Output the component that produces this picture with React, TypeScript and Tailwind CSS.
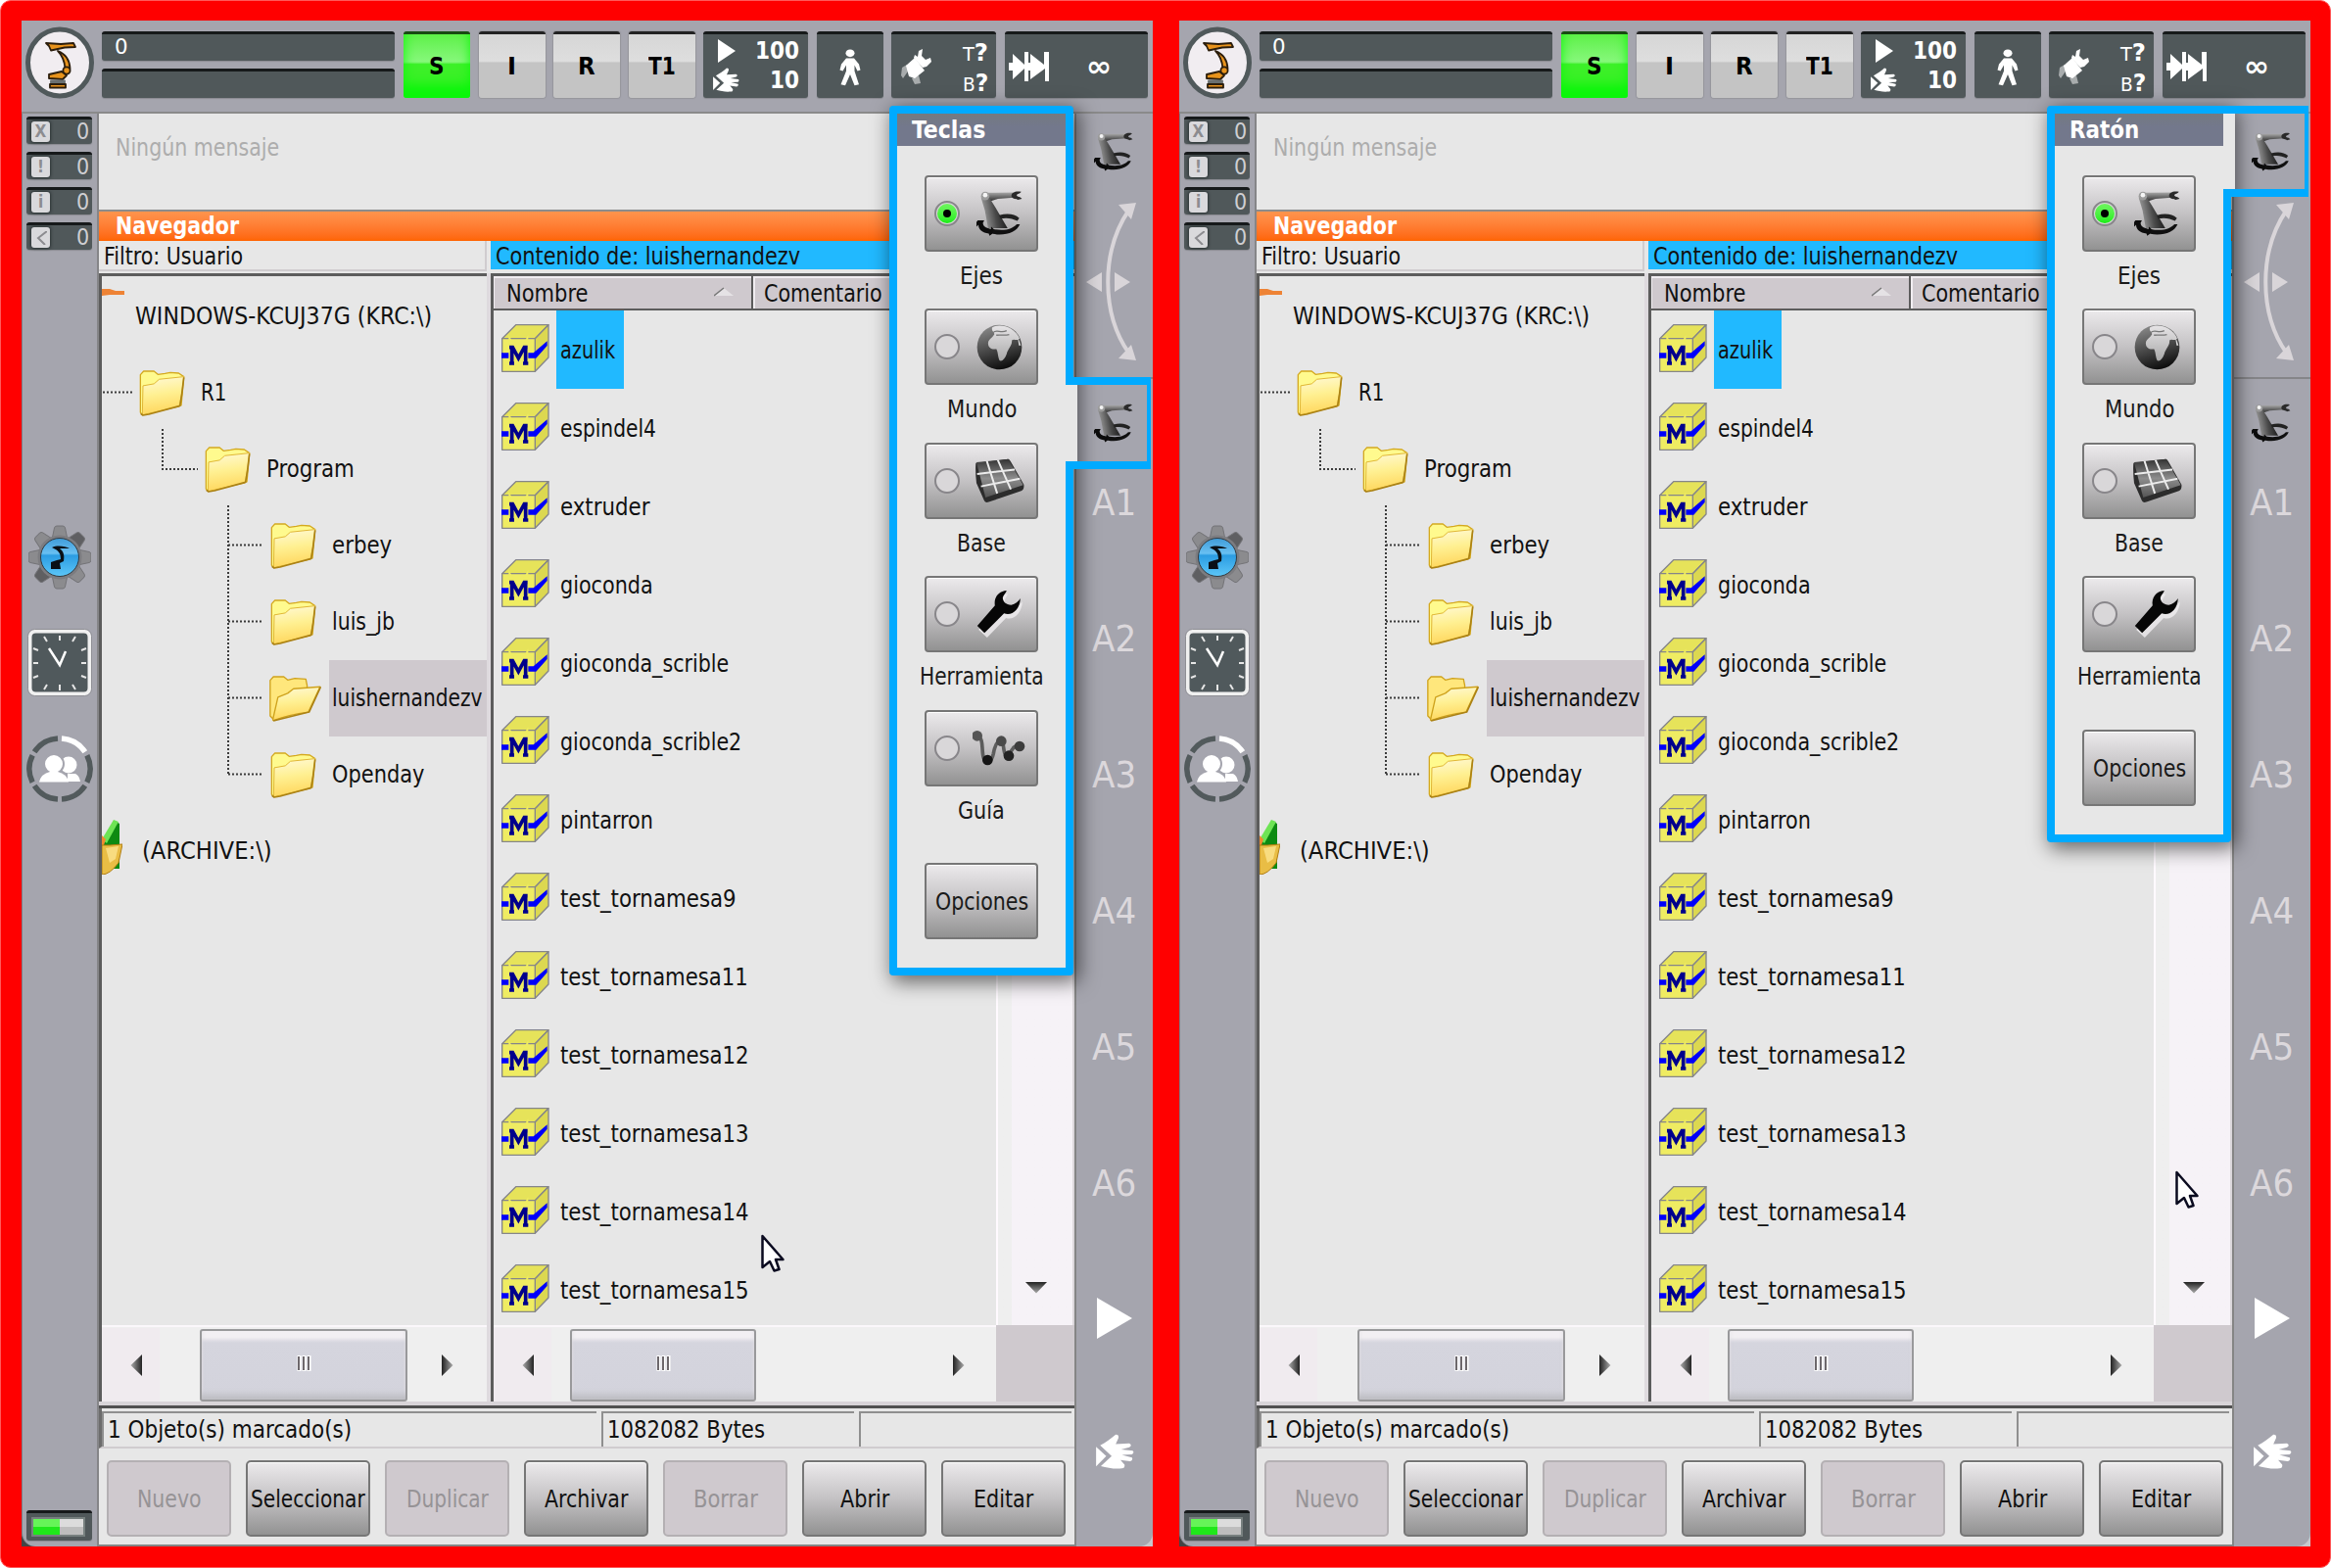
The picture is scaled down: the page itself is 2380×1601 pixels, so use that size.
import { useLayoutEffect, useRef, useState } from "react";
import type { ReactNode } from "react";

/* Text stretched horizontally so that it takes exactly `w` pixels. */
function Fit({ w, children, className = "" }: { w: number; children: ReactNode; className?: string }) {
  const ref = useRef<HTMLSpanElement>(null);
  const [k, setK] = useState(1);
  useLayoutEffect(() => {
    if (ref.current) setK(w / ref.current.offsetWidth);
  }, [w]);
  return (
    <span className={`inline-block shrink-0 whitespace-nowrap ${className}`} style={{ width: w }}>
      <span ref={ref} className="inline-block origin-left" style={{ transform: `scaleX(${k})` }}>
        {children}
      </span>
    </span>
  );
}

function KukaIcon() {
  return (
    <svg viewBox="0 0 70 74" className="h-[74px] w-[70px] shrink-0">
      <ellipse cx="35" cy="37" rx="32.5" ry="34" fill="#f1edf1" stroke="#50595b" strokeWidth="5" />
      <g fill="#e8931c" stroke="#2b1d0c" strokeWidth="1.800" strokeLinejoin="round">
        <path d="M21 17 L36 18 L49 17 L51 21 L40 21.500 L26 24.500 L24 20Z" />
        <path d="M33 25 C41 28 45 33 45.500 43 L40.500 43 C40 36 38 30 33 25Z" />
        <circle cx="42" cy="45" r="3.600" />
        <path d="M24 49 L37 46 L42 50 L38 54 L24 53Z" />
        <path d="M26 55.500 H40 V57.500 H26Z" fill="#9a9a9a" stroke="#6a6f70" />
        <path d="M25 59 H41 V62.500 H25Z" />
      </g>
    </svg>
  );
}

function RobotIcon({ className }: { className: string }) {
  return (
    <svg viewBox="0 0 142 138" className={className}>
      <defs>
        <linearGradient id="arm" x1="0" y1="0.200" x2="1" y2="0">
          <stop offset="0" stopColor="#9a9a9a" />
          <stop offset="0.450" stopColor="#4a4a4a" />
          <stop offset="1" stopColor="#080808" />
        </linearGradient>
        <linearGradient id="boom" x1="0" y1="0" x2="0" y2="1">
          <stop offset="0" stopColor="#a8a8a8" />
          <stop offset="1" stopColor="#2a2a2a" />
        </linearGradient>
      </defs>
      <path d="M28 5 L114 4 L116 20 L66 24 L40 32Z" fill="url(#boom)" />
      <path d="M138 2 C120 -2 106 5 108 16 C112 26 124 22 128 27 L140 24 C136 16 126 19 124 13 C126 7 134 9 138 2Z" fill="#2a2a2a" />
      <path d="M14 20 L42 24 L56 46 L96 114 L36 114 L26 60Z" fill="url(#arm)" />
      <circle cx="27" cy="15" r="13" fill="#9c9c9c" />
      <circle cx="27" cy="12" r="7" fill="#f5f5f5" />
      <path d="M70 74 C98 67 118 71 132 83 L126 92 C110 84 94 81 74 85Z" fill="#222" />
      <path d="M4 90 L24 90 L20 98 C20 108 28 114 44 117 L46 110 L60 124 L40 138 L38 131 C18 129 6 118 6 104 L-2 112 L-2 98Z" fill="#0c0c0c" />
      <path d="M50 117 C88 124 112 116 124 102 L134 102 C124 126 90 139 50 132Z" fill="#101010" />
    </svg>
  );
}

function GlobeIcon() {
  return (
    <svg viewBox="0 0 140 142" className="h-[47px] w-[47px]">
      <defs>
        <linearGradient id="sea" x1="0.300" y1="0" x2="0.600" y2="1">
          <stop offset="0" stopColor="#8a8a8a" />
          <stop offset="0.500" stopColor="#4a4a4a" />
          <stop offset="1" stopColor="#0a0a0a" />
        </linearGradient>
        <linearGradient id="land" x1="0" y1="0" x2="0" y2="1">
          <stop offset="0" stopColor="#e6e4e6" />
          <stop offset="1" stopColor="#a9a9a9" />
        </linearGradient>
      </defs>
      <circle cx="70" cy="71" r="69" fill="url(#sea)" />
      <path d="M48 10 C70 -4 118 8 132 44 C124 54 116 44 108 50 C110 66 96 76 92 92 C86 108 78 116 70 112 C64 96 66 86 60 76 C48 80 34 72 35 58 C36 46 48 42 52 34 C60 26 42 22 48 10Z" fill="url(#land)" />
      <path d="M50 26 C62 14 74 30 92 20 M60 34 C76 32 84 36 100 32" stroke="#777" strokeWidth="4" fill="none" />
      <path d="M126 40 C132 52 134 60 136 66 L130 66Z" fill="#ddd" />
    </svg>
  );
}

function GridIcon() {
  return (
    <svg viewBox="0 0 154 138" className="h-[46px] w-[51px]">
      <defs>
        <linearGradient id="tile" x1="0" y1="0" x2="0" y2="1">
          <stop offset="0" stopColor="#333" />
          <stop offset="0.500" stopColor="#8d8d8d" />
          <stop offset="1" stopColor="#555" />
        </linearGradient>
      </defs>
      <path d="M4 14 L104 2 Q108 2 112 10 L152 80 Q154 96 144 100 L44 134 Q34 138 30 130 L6 76 Q2 40 4 14Z" fill="#2c2c2c" />
      <path d="M6 12 L104 2 L150 82 L34 120 Z" fill="url(#tile)" />
      <path d="M38 8 L70 108 M72 5 L112 95 M8 48 L124 34 M20 86 L140 62" stroke="#ececec" strokeWidth="6" fill="none" />
    </svg>
  );
}

function WrenchIcon() {
  return (
    <svg viewBox="0 0 140 144" className="h-[48px] w-[47px]">
      <path
        d="M92 2 C66 4 52 24 58 50 L2 112 L28 136 L86 76 C110 84 134 62 136 26 C130 34 120 44 108 46 C92 46 82 36 82 22 C84 14 90 8 92 2Z"
        fill="#f1eff1"
        transform="translate(4 8)"
        opacity="0.800"
      />
      <path d="M92 0 C66 2 52 22 56 46 L2 108 L24 130 L84 70 C108 78 132 60 134 24 C128 34 118 42 106 44 C90 44 80 34 80 22 C82 12 90 8 92 0Z" fill="#060606" />
    </svg>
  );
}

function PathIcon() {
  return (
    <svg viewBox="0 0 162 108" className="h-[36px] w-[54px]">
      <path d="M14 16 C36 22 26 60 34 84 C40 106 58 98 64 70 C70 36 86 16 94 44 C98 80 106 92 114 72 C122 52 132 44 144 48" stroke="#5c5c5c" strokeWidth="11" fill="none" />
      <circle cx="14" cy="16" r="16" fill="#555" />
      <circle cx="88" cy="32" r="16" fill="#4a4a4a" />
      <circle cx="144" cy="48" r="16" fill="#3c3c3c" />
      <circle cx="46" cy="90" r="16" fill="#151515" />
      <circle cx="111" cy="77" r="16" fill="#222" />
    </svg>
  );
}

function HandIcon({ className }: { className: string }) {
  return (
    <svg viewBox="0 0 112 104" className={className} fill="#fff">
      <path d="M0 38 L30 66 L0 96Z" />
      <path d="M12 34 C28 26 44 14 58 2 Q68 2 66 12 L58 30 L98 28 Q108 33 98 40 L74 46 L108 50 Q114 55 106 61 L76 62 L106 70 Q110 78 100 81 L72 77 L84 91 Q86 101 76 102 C52 104 34 100 14 95 L46 66Z" />
    </svg>
  );
}

function Folder({ open = false }: { open?: boolean }) {
  return (
    <svg viewBox="0 0 160 142" className={open ? "-ml-[2px] h-[47px] w-[54px] shrink-0" : "h-[47px] w-[53px] shrink-0"}>
      <defs>
        <linearGradient id="fold" x1="0" y1="0" x2="0.150" y2="1">
          <stop offset="0" stopColor="#fff9d8" />
          <stop offset="0.500" stopColor="#fff092" />
          <stop offset="1" stopColor="#ffd75e" />
        </linearGradient>
      </defs>
      {open ? (
        <g stroke="#cfa21c" strokeWidth="4" strokeLinejoin="round">
          <path d="M4 14 L14 3 H46 L58 13 L80 8 L114 10 L118 30 L118 100 L16 136 L4 124Z" fill="#ffe77c" />
          <path d="M12 136 L28 66 L58 54 L76 40 L158 34 L122 112 Q60 120 14 138Z" fill="url(#fold)" />
          <path d="M14 139 L124 112 L160 34" fill="none" stroke="#ab8215" strokeWidth="5" />
        </g>
      ) : (
        <g stroke="#d4a91f" strokeWidth="4" strokeLinejoin="round">
          <path d="M4 14 L14 3 H46 L58 13 L80 10 L96 7 L122 9 L138 20 L130 108 L10 138 L4 130Z" fill="#fffa8e" />
          <path d="M10 138 L12 48 L46 42 L62 28 L138 20 L132 70 L124 112Z" fill="url(#fold)" stroke="#e0b634" strokeWidth="3" />
          <path d="M5 134 L12 139 L30 136 L126 110 L132 72 L138 22" fill="none" stroke="#ab8215" strokeWidth="5" />
        </g>
      )}
    </svg>
  );
}

function ModuleIcon() {
  return (
    <svg viewBox="0 0 147 147" className="h-[49px] w-[49px] shrink-0">
      <g stroke="#85858a" strokeWidth="4" strokeLinejoin="round">
        <path d="M2 44 L44 2 H144 L103 44Z" fill="#e6e35a" />
        <path d="M103 44 L144 2 V102 L103 145Z" fill="#dcd850" />
        <path d="M2 44 H103 V145 H2Z" fill="#efec62" />
      </g>
      <path d="M0 88 H98 L140 52 V66 L106 104 H0Z" fill="#0000fa" />
      <path d="M32 122 V70 L52 104 L72 70 V122" stroke="#efec62" strokeWidth="20" fill="none" />
      <path d="M24 71 H34 L52 104 L70 71 H80 M32 72 V120 M74 72 V120 M24 120 H39 M66 120 H82" stroke="#00008c" strokeWidth="11" fill="none" />
    </svg>
  );
}

function GearIcon() {
  return (
    <svg viewBox="-32 -33 64 66" className="mx-auto mt-[281px] h-[66px] w-[64px] shrink-0">
      <defs>
        <linearGradient id="disc" x1="0" y1="0" x2="0" y2="1">
          <stop offset="0" stopColor="#3f9bd8" />
          <stop offset="0.400" stopColor="#69c0f2" />
          <stop offset="0.450" stopColor="#2b9ce2" />
          <stop offset="1" stopColor="#5cc6f8" />
        </linearGradient>
      </defs>
      {[0, 45, 90, 135, 180, 225, 270, 315].map((a) => (
        <path
          key={a}
          d="M-8 -18 L-5.500 -30 Q-5 -32 -3 -32 H3 Q5 -32 5.500 -30 L8 -18Z"
          transform={`rotate(${a})`}
          fill={a === 45 || a === 225 ? "#5f5f62" : "#8b8b8e"}
          stroke="#737377"
          strokeWidth="1"
        />
      ))}
      <circle r="22.500" fill="#7c7c80" />
      <circle r="19.500" fill="url(#disc)" stroke="#333a40" strokeWidth="1" />
      <path d="M-8 -10 C-2 -13 6 -11 10 -9 L0 -9 C4 -6 5 -2 4 4 L0 6 L1 12 H-9 L-9 5 L-3 3 L1 2 C1 -4 -1 -7 -8 -10Z" fill="#0a1016" />
    </svg>
  );
}

function ClockIcon() {
  return (
    <svg viewBox="0 0 66 70" className="mx-auto mt-[40px] h-[70px] w-[66px] shrink-0">
      <rect x="2.500" y="2.500" width="61" height="64" rx="6" fill="#50595c" stroke="#f0f0f0" strokeWidth="4" />
      <rect x="0.500" y="0.500" width="65" height="68" rx="7" fill="none" stroke="#8f8f95" strokeWidth="1" />
      <path
        d="M33 7 V12 M33 57 V63 M6 35 H11 M55 35 H60 M17 8 L20 13 M49 8 L46 13 M17 62 L20 57 M49 62 L46 57 M6 20 L11 22 M60 20 L55 22 M6 50 L11 48 M60 50 L55 48"
        stroke="#e6e6e6"
        strokeWidth="2"
      />
      <path d="M22 20 L33 37 L39 23" stroke="#fff" strokeWidth="2.500" fill="none" />
    </svg>
  );
}

function UsersIcon() {
  return (
    <svg viewBox="-34 -34 68 70" className="mx-auto mt-[39px] h-[70px] w-[68px] shrink-0">
      {[0, 60, 120, 180, 240, 300].map((a) => (
        <path
          key={a}
          d="M2 -31 A31 31 0 0 1 25.800 -17.200"
          transform={`rotate(${a})`}
          fill="none"
          stroke={a === 0 ? "#fff" : "#525a5c"}
          strokeWidth="5.500"
        />
      ))}
      <g fill="#fff">
        <circle cx="9" cy="-4" r="8.500" />
        <path d="M8 5 L16 5 Q20 7 21 13 H8Z" />
        <circle cx="-6" cy="-5" r="10" fill="#fff" stroke="#a5a5ae" strokeWidth="2" />
        <path d="M-21 13.500 Q-19 5 -10 3 H-2 Q7 5 9 13.500Z" />
      </g>
    </svg>
  );
}

function Cursor({ className }: { className: string }) {
  return (
    <svg viewBox="0 0 24 40" className={`absolute h-[40px] w-[24px] ${className}`}>
      <path d="M1.500 2 V34 L9 28 L13.500 37.500 L18.500 36 L15 26 H22.500Z" fill="#fff" stroke="#0b0b20" strokeWidth="2.500" strokeLinejoin="round" />
    </svg>
  );
}

const darkBox = "rounded-[3px] border-t-[3px] border-[#16191a] bg-[#50585a] shadow-[0_1px_1px_#8b8b92]";
const pill = "flex w-[68px] items-center justify-center rounded-[3px] border-t-[3px] pt-px text-[24px] font-bold text-black";
const greyPill = `${pill} border-[#222] bg-linear-to-b from-[#d6d6d6] from-0% via-[#dedede] via-42% to-[#c4c4c4] to-45% shadow-[0_0_1px_1px_#96969c]`;

function TopBar() {
  return (
    <header className="flex h-[95px] shrink-0 items-start border-b-2 border-[#8a8a8a] bg-[#a5a5ae] pl-[4px]">
      <div className="mt-[6px]">
        <KukaIcon />
      </div>
      <div className="mt-[11px] ml-[8px] flex w-[299px] flex-col gap-[8px]">
        <div className={`flex h-[30px] items-center pb-px pl-[13px] text-[22px] leading-none text-white ${darkBox}`}>
          <Fit w={14}>0</Fit>
        </div>
        <div className={`h-[30px] ${darkBox}`} />
      </div>
      <div className="mt-[11px] ml-[9px] flex h-[68px] gap-[8.5px]">
        <div className={`${pill} border-[#184b12] bg-linear-to-b from-[#5cf046] from-0% via-[#86f87a] via-43% to-[#3cf028] to-47% shadow-[inset_0_-14px_12px_#0af60a]`}>
          <Fit w={16}>S</Fit>
        </div>
        <div className={greyPill}><Fit w={9}>I</Fit></div>
        <div className={greyPill}><Fit w={18}>R</Fit></div>
        <div className={greyPill}><Fit w={28}>T1</Fit></div>
        <div className={`flex w-[107px] justify-between pr-[9px] pl-[9px] text-[24px] leading-[30px] font-bold text-white ${darkBox}`}>
          <div className="flex flex-col items-start pt-[5px]">
            <svg viewBox="0 0 18 24" className="ml-[6px] h-[24px] w-[18px]"><path d="M0 0 L18 12 L0 24Z" fill="#fff" /></svg>
            <HandIcon className="mt-[5px] h-[25px] w-[29px]" />
          </div>
          <div className="flex flex-col items-end pt-[2px]">
            <Fit w={45}>100</Fit>
            <Fit w={30}>10</Fit>
          </div>
        </div>
        <div className={`flex w-[68px] items-center justify-center ${darkBox}`}>
          <svg viewBox="0 0 22 44" className="mt-[2px] h-[38px] w-[22px]" preserveAspectRatio="none" fill="#fff">
            <circle cx="11" cy="5" r="4.500" />
            <path d="M7 11 H15 L20 18 L21.500 25 L18.500 26 L15.500 19 V26 L20 42 L15.500 43 L11 30 L6 43 L1.500 42 L7 26 V19 L3.500 26 L0.500 25 L2 18Z" />
          </svg>
        </div>
        <div className={`flex w-[107px] justify-between pr-[8px] pl-[8px] ${darkBox}`}>
          <svg viewBox="0 0 34 42" className="mt-[14px] h-[42px] w-[34px]" fill="#fff">
            <path d="M7 18 L16 10 L26 23 L16 31 L10 29Z" />
            <path d="M16 7 L19 9 L20 3 L24 1 L23 8 L27 12 L32 10 L33 14 L28 19 L24 20 L15 10Z" />
            <path d="M3 20 L8 17 L11 21 L4 31 L2 28Z M13 31 L20 28 L22 36 L16 37Z" opacity="0.500" />
          </svg>
          <div className="flex flex-col pt-[4px] leading-[30px] text-white">
            <Fit w={26}><span className="text-[19px]">T</span><span className="text-[24px] font-bold">?</span></Fit>
            <Fit w={26}><span className="text-[19px]">B</span><span className="text-[24px] font-bold">?</span></Fit>
          </div>
        </div>
        <div className={`flex w-[146px] items-center pl-[4px] ${darkBox}`}>
          <svg viewBox="0 0 42 32" className="mt-px h-[32px] w-[42px]" fill="#fff">
            <path d="M0 12 H4 V3 L16 14 V1 H20 V12 H22 V3 L36 14 V1 H41 V31 H37 V18 L22 29 V20 H20 V31 H16 V18 L4 29 V20 H0Z" />
          </svg>
          <Fit w={27} className="ml-[37px] text-[30px] leading-none font-bold text-white">∞</Fit>
        </div>
      </div>
    </header>
  );
}

function LeftRail() {
  return (
    <aside className="flex w-[79px] shrink-0 flex-col rounded-bl-[14px] border-r-[2px] border-l border-r-[#858588] border-l-[#7d7d84] bg-[#a5a5ae] pt-[3px] pb-[6px] pl-[4px]">
      <div className="flex flex-col gap-[8px]">
        {["X", "!", "i", "<"].map((g) => (
          <div key={g} className={`flex h-[28px] w-[67px] items-center justify-between pr-[3px] pl-[5px] ${darkBox}`}>
            <span className="flex h-[21px] w-[19px] items-center justify-center rounded-[3px] bg-[#d9d9dc] text-[17px] leading-none font-bold text-[#8c8c90] shadow-[0_0_3px_1px_#2c3435]">
              {g === "<" ? (
                <svg viewBox="0 0 12 14" className="h-[14px] w-[12px]"><path d="M12 0 L3 7 L10 14" fill="none" stroke="#8c8c90" strokeWidth="2" /></svg>
              ) : (
                g
              )}
            </span>
            <Fit w={13} className="text-[23px] leading-none text-[#cfcfd2]">0</Fit>
          </div>
        ))}
      </div>
      <div className="flex w-[67px] flex-col">
        <GearIcon />
        <ClockIcon />
        <UsersIcon />
      </div>
      <div className={`mt-auto flex h-[31px] w-[67px] items-center pl-[5px] ${darkBox}`}>
        <div className="flex h-[20px] w-[55px] border-2 border-[#77807f]">
          <div className="w-[27px] bg-linear-to-b from-[#66f458] from-50% to-[#1fe81a] to-50%" />
          <div className="flex-1 bg-linear-to-b from-[#dcdcdc] from-50% to-[#bdbdbd] to-50%" />
        </div>
      </div>
    </aside>
  );
}

const tree: { name: string; w: number; pad: string; open?: boolean }[] = [
  { name: "R1", w: 26, pad: "pl-[38px]" },
  { name: "Program", w: 90, pad: "pl-[105px]" },
  { name: "erbey", w: 61, pad: "pl-[172px]" },
  { name: "luis_jb", w: 64, pad: "pl-[172px]" },
  { name: "luishernandezv", w: 154, pad: "pl-[172px]", open: true },
  { name: "Openday", w: 94, pad: "pl-[172px]" },
];

function Tree() {
  return (
    <div className="relative h-[1071px] overflow-hidden">
      <svg viewBox="0 0 392 1071" className="absolute top-0 left-0 h-[1071px] w-[392px]">
        <path
          d="M1 118.500 H31 M62 156 V197 H98 M129 234 V508 M129 274.500 H165 M129 352.500 H165 M129 430.500 H165 M129 508.500 H165"
          fill="none"
          stroke="#3c3c3c"
          strokeWidth="2"
          strokeDasharray="2 2"
        />
        <path d="M0 13 L8 13 L14 15 L23 15 V19 L8 19 L0 20Z" fill="#ee8335" />
      </svg>
      <div className="relative flex h-[80px] items-center pt-[2px] pl-[34px]">
        <Fit w={303}>WINDOWS-KCUJ37G (KRC:\)</Fit>
      </div>
      {tree.map((t) => (
        <div key={t.name} className={`relative flex h-[78px] items-center ${t.pad}`}>
          <Folder open={t.open} />
          <div className={`flex h-[78px] flex-1 items-center ${t.open ? "ml-[8px] bg-[#cfc9ce] pl-[3px]" : "ml-[8px] pl-[2px]"}`}>
            <Fit w={t.w}>{t.name}</Fit>
          </div>
        </div>
      ))}
      <div className="relative flex h-[78px] items-center">
        <svg viewBox="0 0 21 56" className="mb-[8px] h-[56px] w-[21px]">
          <path d="M0 28 L13 1 L18 4 V50 H12 V26 L2 30Z" fill="#0d8a12" />
          <path d="M0 20 L12 0 L17 2 L5 24Z" fill="#6ee455" />
          <path d="M0 16 L4 20 L2 26 L0 26Z" fill="#f08a30" />
          <path d="M0 26 L8 26 L21 25 L17 44 Q8 56 0 56Z" fill="#e9bd45" stroke="#b07d12" />
          <path d="M4 29 L17 27 L14 40 L8 44Z" fill="#f8dc80" />
        </svg>
        <Fit w={133} className="ml-[20px]">(ARCHIVE:\)</Fit>
      </div>
    </div>
  );
}

function Arrow({ dir }: { dir: "left" | "right" | "down" }) {
  const turn = dir === "left" ? "rotate-180" : dir === "down" ? "rotate-90" : "";
  return (
    <svg viewBox="0 0 12 24" className={`h-[24px] w-[12px] shrink-0 ${turn}`}>
      <defs>
        <linearGradient id="arr" x1="0" x2="1"><stop offset="0" stopColor="#222" /><stop offset="1" stopColor="#aaa" /></linearGradient>
      </defs>
      <path d="M0 1 L11.500 12 L0 23Z" fill="url(#arr)" />
    </svg>
  );
}

function HScroll({ thumb, lead, tail }: { thumb: string; lead: string; tail: string }) {
  return (
    <div className="flex h-[78px] items-center border-t-2 border-[#fbf7fb] bg-[#efefef] pt-px">
      <div className="flex h-full w-[59px] shrink-0 items-center bg-[#f0ebef] pl-[29px]">
        <Arrow dir="left" />
      </div>
      <div className={`${lead} shrink-0`} />
      <div className={`flex h-[74px] shrink-0 items-center justify-center rounded-[3px] border-2 border-[#99999b] bg-linear-to-b from-[#f7f4f7] from-0% via-[#d5d5de] via-18% to-[#d3d3dc] shadow-[inset_0_-8px_6px_-3px_#bdbdc2,inset_0_8px_3px_#f2eff3] ${thumb}`}>
        <svg viewBox="0 0 16 16" className="mb-[3px] h-[16px] w-[16px]">
          <path d="M3.500 0 V16 M8.500 0 V16 M13.500 0 V16" stroke="#fff" strokeWidth="4" />
          <path d="M3 1 V15 M8 1 V15 M13 1 V15" stroke="#6d686c" strokeWidth="2" />
        </svg>
      </div>
      <div className="flex-1" />
      <div className={`shrink-0 ${tail}`}>
        <Arrow dir="right" />
      </div>
    </div>
  );
}

const files: [string, number][] = [
  ["azulik", 56], ["espindel4", 98], ["extruder", 91], ["gioconda", 95], ["gioconda_scrible", 172],
  ["gioconda_scrible2", 185], ["pintarron", 95], ["test_tornamesa9", 180], ["test_tornamesa11", 192],
  ["test_tornamesa12", 193], ["test_tornamesa13", 193], ["test_tornamesa14", 193], ["test_tornamesa15", 193],
];

function FileList() {
  return (
    <div className="flex w-[596px] flex-col border-t-[3px] border-l-[3px] border-[#5c5c5c]">
      <div className="flex h-[1071px]">
        <div className="relative h-[1071px] w-[513px] overflow-hidden">
          <div className="flex h-[35px] w-[600px] border-b-2 border-[#5c5c5c] bg-[#cfc9ce] shadow-[inset_1px_2px_0_#f1edf1]">
            <div className="flex w-[265px] items-center justify-between border-r-2 border-[#5c5c5c] pt-[3px] pr-[18px] pl-[13px]">
              <Fit w={84}>Nombre</Fit>
              <svg viewBox="0 0 20 10" className="mb-1 h-[10px] w-[20px]"><path d="M0 9 L10 1 L20 9Z" fill="#e5e2e5" /><path d="M0 9 L10 1" stroke="#777" strokeWidth="1.500" /></svg>
            </div>
            <div className="flex items-center pt-[3px] pl-[11px] shadow-[inset_2px_0_0_#f1edf1]">
              <Fit w={121}>Comentario</Fit>
            </div>
          </div>
          {files.map(([name, w], i) => (
            <div key={name} className="flex h-[80px] items-center pl-[8px]">
              <div className="-mt-[3px]"><ModuleIcon /></div>
              <div className={`ml-[7px] flex h-[80px] items-center pt-px pl-[3.500px] ${i === 0 ? "w-[69px] bg-[#21b9ff]" : ""}`}>
                <Fit w={w}>{name}</Fit>
              </div>
            </div>
          ))}
        </div>
        <div className="flex flex-1 flex-col items-center justify-end border-r-2 border-l-2 border-l-[#fffaff] border-r-[#dcd8dc] bg-linear-to-r from-[#efefef] from-18% to-[#f6f2f7] to-19% pb-[26px] pl-[2px]">
          <Arrow dir="down" />
        </div>
      </div>
      <div className="flex">
        <div className="w-[513px]">
          <HScroll lead="w-[19px]" thumb="w-[190px]" tail="w-[44px]" />
        </div>
        <div className="flex-1 bg-[#cfc9ce]" />
      </div>
    </div>
  );
}

const actions: [string, number, boolean][] = [
  ["Nuevo", 66, false], ["Seleccionar", 117, true], ["Duplicar", 84, false], ["Archivar", 85, true],
  ["Borrar", 66, false], ["Abrir", 50, true], ["Editar", 61, true],
];

const keyFace = "border-2 border-[#767676] bg-linear-to-b from-[#eceaec] via-[#c4c2c4] via-50% to-[#929292] shadow-[inset_0_1px_0_#fff]";

function Main() {
  const cell = "flex h-[36px] items-center border-t-2 border-l-2 border-[#8f8f8f]";
  return (
    <main className="flex w-[998px] shrink-0 flex-col border-r-[2px] border-b-2 border-[#858585] bg-[#e7e7e7]">
      <div className="flex h-[100px] items-start border-b-2 border-[#8c8c8c] pt-[19px] pl-[17px] text-[#adadad]">
        <Fit w={167}>Ningún mensaje</Fit>
      </div>
      <div className="flex h-[30px] items-center bg-linear-to-b from-[#ff944d] to-[#ff6400] pl-[17px] font-bold text-white">
        <Fit w={126}>Navegador</Fit>
      </div>
      <div className="flex h-[33px] items-start">
        <div className="flex h-[31px] w-[396px] items-center border-r-2 border-b-2 border-[#d0cccf] pt-[3px] pl-[5px]">
          <Fit w={142}>Filtro: Usuario</Fit>
        </div>
        <div className="ml-[4px] flex h-[29px] flex-1 items-center bg-[#21b9ff] pt-[2px] pl-[5px]">
          <Fit w={311}>Contenido de: luishernandezv</Fit>
        </div>
      </div>
      <div className="flex h-[1152px] shrink-0">
        <div className="w-[396px] border-t-[3px] border-l-[3px] border-[#5c5c5c]">
          <Tree />
          <HScroll lead="w-[41px]" thumb="w-[212px]" tail="w-[46px]" />
        </div>
        <div className="w-[4px] bg-[#dedade]" />
        <FileList />
      </div>
      <div className="h-[4px] shrink-0 bg-[#d8d4d8]" />
      <div className="h-[3px] shrink-0 bg-[#505050]" />
      <div className="flex h-[41px] shrink-0 gap-[5px] border-b-2 border-l-[3px] border-b-[#d0cccf] border-l-[#6c6c6c] pt-[3px]">
        <div className={`${cell} w-[505px] pl-[4px]`}><Fit w={249}>1 Objeto(s) marcado(s)</Fit></div>
        <div className={`${cell} w-[258px] pl-[4px]`}><Fit w={161}>1082082 Bytes</Fit></div>
        <div className={`${cell} w-[217px]`} />
      </div>
      <div className="flex gap-[15px] pt-[12px] pl-[8px]">
        {actions.map(([name, w, on]) => (
          <div
            key={name}
            className={`flex h-[78px] w-[127px] shrink-0 items-center justify-center rounded-[5px] pt-[2px] ${on ? `text-[#111] ${keyFace}` : "border-2 border-[#b4b0b3] bg-[#cfc9ce] text-[#969396]"}`}
          >
            <Fit w={w}>{name}</Fit>
          </div>
        ))}
      </div>
    </main>
  );
}

function RightRail() {
  return (
    <aside className="flex w-[78px] flex-col rounded-br-[14px] bg-[#a5a5ae]">
      <div className="flex h-[271px] shrink-0 flex-col border-b-2 border-[#858588] pt-[19px]">
        <RobotIcon className="ml-[18px] h-[40px] w-[40px]" />
        <svg viewBox="0 0 48 164" className="mt-[31px] ml-[8px] h-[164px] w-[54px] overflow-visible" fill="#d9d5d9">
          <path d="M43 8 C14 50 14 114 43 155" fill="none" stroke="#d9d5d9" strokeWidth="4" />
          <path d="M32 3 L50 1 L45 18Z M32 160 L50 162 L45 146Z M-1 82 L15 72 V92Z M44 82 L28 72 V92Z" />
        </svg>
      </div>
      <div className="-mb-[9px] shrink-0 pt-[25px]">
        <RobotIcon className="ml-[18px] h-[40px] w-[40px]" />
      </div>
      {["A1", "A2", "A3", "A4", "A5", "A6"].map((a) => (
        <div key={a} className="flex h-[139px] shrink-0 items-center pl-[16px] text-[38px] text-[#dcd8dc]">
          <Fit w={45}>{a}</Fit>
        </div>
      ))}
      <div className="flex h-[137px] shrink-0 items-center pl-[20px]">
        <svg viewBox="0 0 38 42" className="h-[42px] w-[38px]"><path d="M1 0 L37 21 L1 42Z" fill="#fff" /></svg>
      </div>
      <div className="flex h-[136px] shrink-0 items-center pl-[18px]">
        <HandIcon className="h-[36px] w-[43px]" />
      </div>
    </aside>
  );
}

const modes: { name: string; w: number; icon: ReactNode }[] = [
  { name: "Ejes", w: 44, icon: <RobotIcon className="h-[46px] w-[47px]" /> },
  { name: "Mundo", w: 71, icon: <GlobeIcon /> },
  { name: "Base", w: 50, icon: <GridIcon /> },
  { name: "Herramienta", w: 127, icon: <WrenchIcon /> },
  { name: "Guía", w: 48, icon: <PathIcon /> },
];

function Popup({ title, titleW, count, tab }: { title: string; titleW: number; count: number; tab: "top" | "middle" }) {
  return (
    <div className="absolute top-[87px] left-[886px]">
      <div className="flex w-[188px] flex-col items-center rounded-[4px] border-8 border-[#00aaff] bg-[#e7e7e7] pb-[29px] shadow-[4px_5px_20px_2px_rgba(0,0,0,0.55)]">
        <div className="flex h-[33px] w-full items-center bg-linear-to-b from-[#747a80] to-[#73788c] to-40% pt-px pl-[15px] font-bold text-white">
          <Fit w={titleW}>{title}</Fit>
        </div>
        <div className="flex w-full flex-col items-center pt-[30px]">
          {modes.slice(0, count).map((m, i) => (
            <div key={m.name} className="flex h-[136.4px] flex-col items-center">
              <div className={`flex h-[78px] w-[116px] items-center rounded-[4px] pl-[8px] ${keyFace}`}>
                <span className="flex size-[26px] shrink-0 items-center justify-center rounded-full border-2 border-[#88868a] bg-[#d9d7d9]">
                  {i === 0 && (
                    <span className="flex size-[20px] shrink-0 items-center justify-center rounded-full bg-linear-to-b from-[#6df55e] to-[#12ee10]">
                      <span className="size-[8px] rounded-full bg-black" />
                    </span>
                  )}
                </span>
                <span className="flex flex-1 items-center justify-center pl-[2px]">{m.icon}</span>
              </div>
              <div className="mt-[9px] h-[32px] text-[#1a1a1a]">
                <Fit w={m.w}>{m.name}</Fit>
              </div>
            </div>
          ))}
          <div className={`mt-[20px] flex h-[78px] w-[116px] items-center justify-center rounded-[4px] pt-[2px] text-[#1a1a1a] ${keyFace}`}>
            <Fit w={95}>Opciones</Fit>
          </div>
        </div>
      </div>
      {tab === "middle" ? (
        <div className="absolute top-[277px] left-[180px] flex h-[94px] w-[87px] border-y-8 border-r-4 border-[#00aaff]">
          <div className="w-[12px] bg-[#e7e7e7]" />
        </div>
      ) : (
        <div className="absolute top-0 left-[180px] flex h-[93px] w-[87px] border-y-8 border-r-4 border-[#00aaff]">
          <div className="w-[12px] bg-[#e7e7e7]" />
        </div>
      )}
    </div>
  );
}

function Screen({ children }: { children: ReactNode }) {
  return (
    <section className="relative flex h-[1558px] w-[1155px] shrink-0 flex-col overflow-hidden">
      <TopBar />
      <div className="flex flex-1 bg-linear-to-r from-[#444] from-50% to-[#c8c8cc] to-50%">
        <LeftRail />
        <Main />
        <RightRail />
      </div>
      {children}
    </section>
  );
}

export default function App() {
  return (
    <div className="h-[1601px] w-[2380px] overflow-hidden bg-white">
      <div className="flex h-full w-full gap-[27px] rounded-[11px] border border-[#ff5a5a] bg-[#ff0000] pt-[20px] pl-[21px] font-['DejaVu_Sans_Condensed','DejaVu_Sans',sans-serif] text-[24.5px] leading-[32px] text-[#111] [font-stretch:condensed]">
        <Screen>
          <Popup title="Teclas" titleW={75} count={5} tab="middle" />
          <Cursor className="top-[1239px] left-[755px]" />
        </Screen>
        <Screen>
          <Popup title="Ratón" titleW={71} count={4} tab="top" />
          <Cursor className="top-[1174px] left-[1017px]" />
        </Screen>
      </div>
    </div>
  );
}
